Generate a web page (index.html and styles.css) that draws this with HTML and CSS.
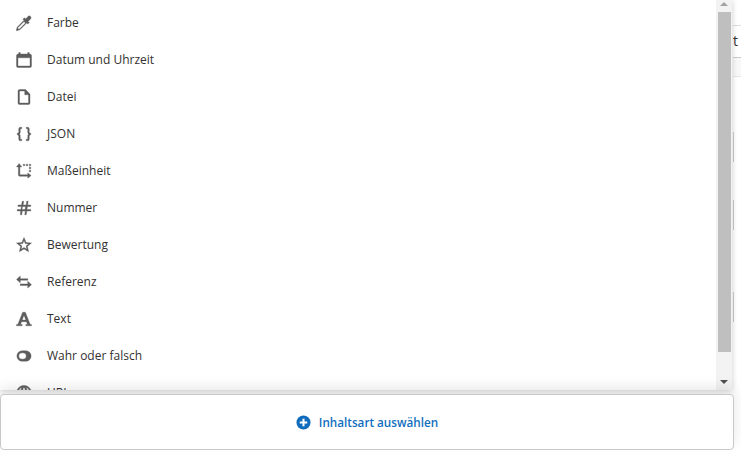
FILE: index.html

```html
<!DOCTYPE html>
<html lang="de">
<head>
    <meta charset="UTF-8">
    <title>Inhaltsart auswählen</title>
    <link rel="stylesheet" href="styles.css">
</head>
<body>
    <div class="stage">
        <!-- Page behind the popup, only its right edge shows -->
        <div class="behind">
            <div class="behind-head"><span class="behind-letter">t</span></div>
            <div class="behind-sub"></div>
            <div class="behind-field field-one"></div>
            <div class="behind-field field-two"></div>
            <div class="behind-field field-three"></div>
        </div>

        <div class="popup">
            <ul class="type-list">
                <li class="type-item">
                    <svg class="type-icon" viewBox="0 0 24 24"><path fill-rule="evenodd" d="M20.700 3.300a2.400 2.400 0 0 0-3.400 0l-3.200 3.200-1.600-1.600-2 2 1.500 1.500-8.500 8.500c-.6.6-1 1.400-1 2.300l-1 2.300 1 1 2.300-1c.9 0 1.700-.4 2.300-1l8.500-8.500 1.500 1.500 2-2-1.600-1.600 3.200-3.200a2.400 2.400 0 0 0 0-3.400zM12 10l2 2-8 8H4v-2l8-8z"/></svg>
                    <span>Farbe</span>
                </li>
                <li class="type-item">
                    <svg class="type-icon" viewBox="0 0 24 24"><path d="M20 4h-1V2h-2v2H7V2H5v2H4a2 2 0 0 0-2 2v14a2 2 0 0 0 2 2h16a2 2 0 0 0 2-2V6a2 2 0 0 0-2-2zm0 16H4V9h16v11z"/></svg>
                    <span>Datum und Uhrzeit</span>
                </li>
                <li class="type-item">
                    <svg class="type-icon" viewBox="0 0 24 24"><path d="M14 2H6a2 2 0 0 0-2 2v16a2 2 0 0 0 2 2h12a2 2 0 0 0 2-2V8l-6-6zm4 18H6V4h7v5h5v11z"/></svg>
                    <span>Datei</span>
                </li>
                <li class="type-item">
                    <svg class="type-icon" viewBox="0 0 24 24"><path d="M9 3H7a2 2 0 0 0-2 2v4a2 2 0 0 1-2 2v2a2 2 0 0 1 2 2v4a2 2 0 0 0 2 2h2v-2H7v-5a2 2 0 0 0-2-2 2 2 0 0 0 2-2V5h2V3zm6 0h2a2 2 0 0 1 2 2v4a2 2 0 0 0 2 2v2a2 2 0 0 0-2 2v4a2 2 0 0 1-2 2h-2v-2h2v-5a2 2 0 0 1 2-2 2 2 0 0 1-2-2V5h-2V3z"/></svg>
                    <span>JSON</span>
                </li>
                <li class="type-item">
                    <svg class="type-icon" viewBox="0 0 24 24"><path d="M5.500 2L9 6.500H6.500V17H17v-2.500l4.500 3.500-4.500 3.500V19H6.500a2 2 0 0 1-2-2V6.500H2L5.500 2zM11 3h2v2h-2V3zm4 0h2v2h-2V3zm4 0h2v2h-2V3zm0 4h2v2h-2V7zm0 4h2v2h-2v-2z"/></svg>
                    <span>Maßeinheit</span>
                </li>
                <li class="type-item">
                    <svg class="type-icon" viewBox="0 0 24 24"><path d="M9.500 3l-.7 5H4v2h4.500l-.6 4H3v2h4.600L7 21h2l.7-5h4l-.7 5h2l.7-5H21v-2h-5l.6-4H21V8h-4.100l.7-5h-2l-.7 5h-4l.7-5h-2.100zm.5 7h4l-.6 4h-4l.6-4z"/></svg>
                    <span>Nummer</span>
                </li>
                <li class="type-item">
                    <svg class="type-icon" viewBox="0 0 24 24"><path d="M22 9.240l-7.190-.62L12 2 9.190 8.630 2 9.240l5.460 4.730L5.820 21 12 17.270 18.180 21l-1.630-7.030L22 9.240zM12 15.400l-3.760 2.270 1-4.280-3.320-2.880 4.380-.38L12 6.100l1.710 4.040 4.380.38-3.320 2.880 1 4.280L12 15.400z"/></svg>
                    <span>Bewertung</span>
                </li>
                <li class="type-item">
                    <svg class="type-icon" viewBox="0 0 24 24"><path d="M7 4L2 8.500 7 13V9.500h10v-2H7V4zm10 7v3.500H7v2h10V20l5-4.500-5-4.500z"/></svg>
                    <span>Referenz</span>
                </li>
                <li class="type-item">
                    <svg class="type-icon" viewBox="0 0 24 24"><path d="M10.200 3h3.600l6.400 16.200H22V21h-7.600v-1.800h2.200l-1.300-3.600H8.700l-1.300 3.600h2.200V21H2v-1.800h1.800L10.200 3zM12 6.900l-2.500 6.500h5L12 6.900z"/></svg>
                    <span>Text</span>
                </li>
                <li class="type-item">
                    <svg class="type-icon" viewBox="0 0 24 24"><path fill-rule="evenodd" d="M14.500 5h-5a7 7 0 0 0 0 14h5a7 7 0 0 0 0-14zM5 12a5 4.300 0 1 0 10 0 5 4.300 0 0 0-10 0z"/></svg>
                    <span>Wahr oder falsch</span>
                </li>
                <li class="type-item">
                    <svg class="type-icon" viewBox="0 0 24 24"><path d="M11.990 2C6.470 2 2 6.480 2 12s4.470 10 9.990 10C17.520 22 22 17.520 22 12S17.520 2 11.990 2zm6.930 6h-2.950c-.32-1.250-.78-2.450-1.380-3.560 1.840.63 3.370 1.910 4.330 3.560zM12 4.040c.83 1.200 1.480 2.530 1.910 3.960h-3.820c.43-1.430 1.080-2.760 1.910-3.960zM4.260 14C4.100 13.360 4 12.690 4 12s.1-1.360.26-2h3.380c-.08.66-.14 1.320-.14 2 0 .68.06 1.340.14 2H4.260zm3.770-6H5.080c.96-1.660 2.490-2.930 4.330-3.560C8.810 5.550 8.350 6.750 8.030 8z"/></svg>
                    <span>URL</span>
                </li>
            </ul>
            <div class="scrollbar">
                <div class="arrow arrow-up"></div>
                <div class="thumb"></div>
                <div class="arrow arrow-down"></div>
            </div>
        </div>
    </div>

    <button class="pick-btn">
        <svg class="plus-icon" viewBox="0 0 16 16"><circle cx="8" cy="8" r="7.500"/><path class="plus-cross" d="M8 4v8M4 8h8"/></svg>
        <span>Inhaltsart auswählen</span>
    </button>
</body>
</html>
```

FILE: styles.css

```css
/* General */
body {
    margin: 0;
    width: 741px;
    height: 450px;
    overflow: hidden;
    background: #fff;
    font-family: 'Open Sans', sans-serif;
    font-size: 12px;
    color: #323130;
}

.stage {
    position: relative;
    height: 394px;
}

/* Page behind the popup */
.behind {
    margin-left: 733px;
    padding-top: 25px;
}

.behind-head {
    height: 31px;
    border-top: 1px solid #ddd;
    border-bottom: 1px solid #ccc;
}

.behind-letter {
    font-size: 14px;
    line-height: 30px;
}

.behind-sub {
    height: 18px;
    border-bottom: 1px solid #e6e6e6;
    background: #f8f8f8;
}

.behind-field {
    width: 1px;
    height: 30px;
    background: #ccc;
}

.field-one { margin-top: 55px; }
.field-two { margin-top: 38px; }
.field-three { margin-top: 62px; }

/* Popup list */
.popup {
    position: absolute;
    top: 0;
    left: 0;
    width: 732px;
    height: 390px;
    display: flex;
    background: #fff;
    box-shadow: 0 0 6px rgba(0, 0, 0, 0.2);
}

.type-list {
    flex: 1;
    list-style: none;
    margin: 0;
    padding: 4px 0 0;
    overflow: hidden;
}

.type-item {
    height: 37px;
    display: flex;
    align-items: center;
    gap: 14px;
    padding-left: 15px;
}

.type-icon {
    width: 18px;
    height: 18px;
    fill: #5c5c5c;
    stroke: #5c5c5c;
    stroke-width: 0.5;
    flex-shrink: 0;
}

/* Scrollbar */
.scrollbar {
    width: 16px;
    display: flex;
    flex-direction: column;
    align-items: center;
    background: #f3f3f3;
}

.arrow {
    width: 0;
    height: 0;
    border-left: 4px solid transparent;
    border-right: 4px solid transparent;
}

.arrow-up {
    margin-top: 2px;
    border-bottom: 4px solid #a3a3a3;
}

.arrow-down {
    margin-top: 28px;
    border-top: 4px solid #505050;
}

.thumb {
    width: 13px;
    height: 340px;
    margin: 6px 1px 0 2px;
    background: #bfbfbf;
}

/* Bottom button */
.pick-btn {
    position: relative;
    width: 734px;
    height: 56px;
    display: flex;
    align-items: center;
    justify-content: center;
    gap: 8px;
    padding: 0;
    background: #fff;
    border: 1px solid #c8c8c8;
    border-radius: 4px;
    box-shadow: 0 -6px 14px rgba(0, 0, 0, 0.1);
    font-family: inherit;
    font-size: 11.7px;
    font-weight: 600;
    color: #106ebe;
}

.plus-icon {
    width: 15px;
    height: 15px;
}

.plus-icon circle {
    fill: #0f6cbd;
}

.plus-cross {
    stroke: #fff;
    stroke-width: 2.2;
    fill: none;
}
```
